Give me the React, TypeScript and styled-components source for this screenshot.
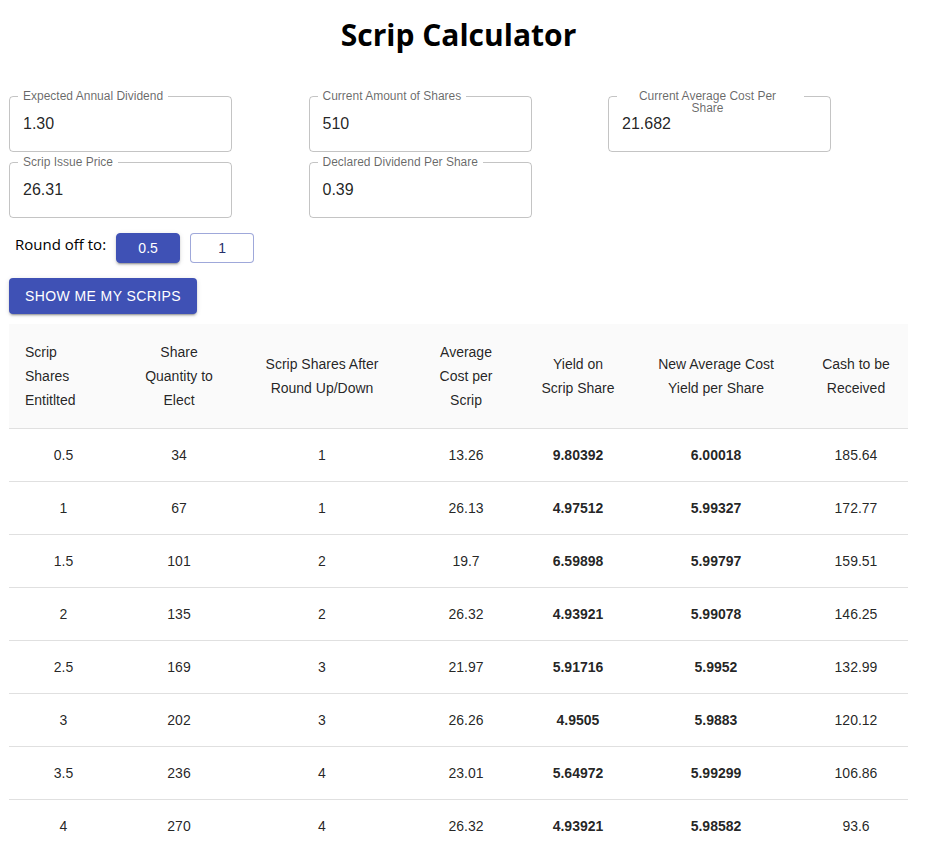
import React from 'react';
import styled, { createGlobalStyle } from 'styled-components';

interface FieldOption {
    label: string;
    value: string;
    wrap?: boolean;
}

interface ScripRow {
    entitled: string;
    quantity: string;
    rounded: string;
    avgCost: string;
    yieldScrip: string;
    newYield: string;
    cash: string;
}

const fieldRows: FieldOption[][] = [
    [
        { label: 'Expected Annual Dividend', value: '1.30' },
        { label: 'Current Amount of Shares', value: '510' },
        { label: 'Current Average Cost Per Share', value: '21.682', wrap: true },
    ],
    [
        { label: 'Scrip Issue Price', value: '26.31' },
        { label: 'Declared Dividend Per Share', value: '0.39' },
    ],
];

// header text, column width, side padding of the header cell
const columns: [string, number, number][] = [
    ['Scrip Shares Entitlted', 109, 16],
    ['Share Quantity to Elect', 122, 16],
    ['Scrip Shares After Round Up/Down', 164, 16],
    ['Average Cost per Scrip', 124, 22],
    ['Yield on Scrip Share', 100, 12],
    ['New Average Cost Yield per Share', 176, 16],
    ['Cash to be Received', 104, 16],
];

const rows: ScripRow[] = [
    { entitled: '0.5', quantity: '34', rounded: '1', avgCost: '13.26', yieldScrip: '9.80392', newYield: '6.00018', cash: '185.64' },
    { entitled: '1', quantity: '67', rounded: '1', avgCost: '26.13', yieldScrip: '4.97512', newYield: '5.99327', cash: '172.77' },
    { entitled: '1.5', quantity: '101', rounded: '2', avgCost: '19.7', yieldScrip: '6.59898', newYield: '5.99797', cash: '159.51' },
    { entitled: '2', quantity: '135', rounded: '2', avgCost: '26.32', yieldScrip: '4.93921', newYield: '5.99078', cash: '146.25' },
    { entitled: '2.5', quantity: '169', rounded: '3', avgCost: '21.97', yieldScrip: '5.91716', newYield: '5.9952', cash: '132.99' },
    { entitled: '3', quantity: '202', rounded: '3', avgCost: '26.26', yieldScrip: '4.9505', newYield: '5.9883', cash: '120.12' },
    { entitled: '3.5', quantity: '236', rounded: '4', avgCost: '23.01', yieldScrip: '5.64972', newYield: '5.99299', cash: '106.86' },
    { entitled: '4', quantity: '270', rounded: '4', avgCost: '26.32', yieldScrip: '4.93921', newYield: '5.98582', cash: '93.6' },
    { entitled: '4.5', quantity: '304', rounded: '5', avgCost: '23.71', yieldScrip: '5.48292', newYield: '5.99013', cash: '80.34' },
    { entitled: '5', quantity: '337', rounded: '5', avgCost: '26.29', yieldScrip: '4.94485', newYield: '5.98341', cash: '67.47' },
];

const GlobalStyle = createGlobalStyle`
    body {
        margin: 0;
        background: #fff;
        font-family: "Liberation Sans", Arial, sans-serif;
        color: rgba(0, 0, 0, 0.87);
    }
`;

const Page = styled.main`
    display: flex;
    flex-direction: column;
    padding: 0 21px 0 9px;
`;

const Title = styled.h1`
    margin: 15px 0 0;
    font-family: "Open Sans", "Noto Sans", sans-serif;
    font-size: 30px;
    font-weight: 700;
    line-height: 40px;
    text-align: center;
    color: #000;
`;

const FieldGrid = styled.section`
    display: flex;
    flex-direction: column;
    gap: 10px;
    margin-top: 41px;
`;

const FieldRow = styled.div`
    display: flex;
    gap: 76.5px;
`;

const Field = styled.div`
    position: relative;
    box-sizing: border-box;
    width: 223px;
    height: 56px;
    padding: 17px 14px 0 13px;
    border: 1px solid rgba(0, 0, 0, 0.23);
    border-radius: 4px;
`;

const FieldLabel = styled.label<{ $wrap?: boolean }>`
    position: absolute;
    top: -7px;
    left: 8px;
    box-sizing: border-box;
    width: ${({ $wrap }) => ($wrap ? '187px' : 'auto')};
    padding: ${({ $wrap }) => ($wrap ? '0 22px 0 16px' : '0 5px')};
    background: #fff;
    font-size: 12px;
    line-height: 12px;
    text-align: center;
    color: rgba(0, 0, 0, 0.6);
`;

const FieldValue = styled.div`
    font-size: 16px;
    line-height: 19px;
    color: rgba(0, 0, 0, 0.87);
`;

const RoundRow = styled.div`
    display: flex;
    align-items: center;
    gap: 10px;
    margin: 15px 0 0 6px;
`;

const RoundLabel = styled.span`
    position: relative;
    top: -4px;
    font-family: "Open Sans", "Noto Sans", sans-serif;
    font-size: 15px;
    color: #000;
`;

const RoundButton = styled.button<{ $active?: boolean }>`
    box-sizing: border-box;
    width: 64px;
    height: 30px;
    padding: 0;
    border: 1px solid ${({ $active }) => ($active ? '#3f51b5' : 'rgba(63, 81, 181, 0.5)')};
    border-radius: 4px;
    background: ${({ $active }) => ($active ? '#3f51b5' : '#fff')};
    color: ${({ $active }) => ($active ? '#fff' : '#26306b')};
    font-family: "Liberation Sans", Arial, sans-serif;
    font-size: 14px;
    box-shadow: ${({ $active }) =>
        $active ? '0 3px 1px -2px rgba(0,0,0,0.2), 0 2px 2px 0 rgba(0,0,0,0.14), 0 1px 5px 0 rgba(0,0,0,0.12)' : 'none'};
`;

const SubmitButton = styled.button`
    align-self: flex-start;
    box-sizing: border-box;
    width: 188px;
    height: 36px;
    margin-top: 15px;
    padding: 0 16px;
    border: none;
    border-radius: 4px;
    background: #3f51b5;
    color: #fff;
    font-family: "Liberation Sans", Arial, sans-serif;
    font-size: 14px;
    font-weight: 500;
    letter-spacing: 0.4px;
    text-transform: uppercase;
    box-shadow: 0 3px 1px -2px rgba(0, 0, 0, 0.2), 0 2px 2px 0 rgba(0, 0, 0, 0.14), 0 1px 5px 0 rgba(0, 0, 0, 0.12);
`;

const Table = styled.table`
    width: 899px;
    margin-top: 10px;
    border-collapse: collapse;
    table-layout: fixed;
    font-size: 14px;
`;

const HeadCell = styled.th<{ $left?: boolean; $pad: number }>`
    padding: 16px ${({ $pad }) => $pad}px;
    background: #fafafa;
    border-bottom: 1px solid #e0e0e0;
    font-weight: 400;
    line-height: 24px;
    text-align: ${({ $left }) => ($left ? 'left' : 'center')};
    color: rgba(0, 0, 0, 0.87);
`;

const Cell = styled.td<{ $bold?: boolean }>`
    padding: 16px 0;
    border-bottom: 1px solid #e0e0e0;
    line-height: 20px;
    text-align: center;
    font-weight: ${({ $bold }) => ($bold ? 700 : 400)};
    color: rgba(0, 0, 0, 0.87);
`;

const App: React.FC = () => (
    <>
        <GlobalStyle />
        <Page>
            <Title>Scrip Calculator</Title>
            <FieldGrid>
                {fieldRows.map((fields, i) => (
                    <FieldRow key={i}>
                        {fields.map(({ label, value, wrap }) => (
                            <Field key={label}>
                                <FieldLabel $wrap={wrap}>{label}</FieldLabel>
                                <FieldValue>{value}</FieldValue>
                            </Field>
                        ))}
                    </FieldRow>
                ))}
            </FieldGrid>
            <RoundRow>
                <RoundLabel>Round off to:</RoundLabel>
                <RoundButton $active>0.5</RoundButton>
                <RoundButton>1</RoundButton>
            </RoundRow>
            <SubmitButton>Show me my scrips</SubmitButton>
            <Table>
                <colgroup>
                    {columns.map(([, w], i) => (
                        <col key={i} style={{ width: w }} />
                    ))}
                </colgroup>
                <thead>
                    <tr>
                        {columns.map(([h, , pad], i) => (
                            <HeadCell key={h} $left={i === 0} $pad={pad}>
                                {h}
                            </HeadCell>
                        ))}
                    </tr>
                </thead>
                <tbody>
                    {rows.map((r) => (
                        <tr key={r.entitled}>
                            <Cell>{r.entitled}</Cell>
                            <Cell>{r.quantity}</Cell>
                            <Cell>{r.rounded}</Cell>
                            <Cell>{r.avgCost}</Cell>
                            <Cell $bold>{r.yieldScrip}</Cell>
                            <Cell $bold>{r.newYield}</Cell>
                            <Cell>{r.cash}</Cell>
                        </tr>
                    ))}
                </tbody>
            </Table>
        </Page>
    </>
);

export default App;
